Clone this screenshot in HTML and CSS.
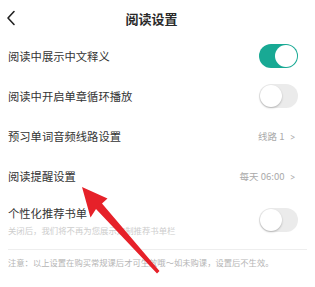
FILE: index.html
```html
<!DOCTYPE html>
<html lang="zh">
<head>
<meta charset="utf-8">
<link rel="stylesheet" href="styles.css">
</head>
<body>
<div class="page">
  <header class="header">
    <svg class="back" width="10" height="16" viewBox="0 0 10 16"><path d="M8 1.5 L2 8 L8 14.5" fill="none" stroke="#222" stroke-width="1.6" stroke-linecap="round" stroke-linejoin="round"/></svg>
    <div class="title">阅读设置</div>
  </header>
  <div class="row">
    <span class="label">阅读中展示中文释义</span>
    <span class="toggle on"><span class="knob"></span></span>
  </div>
  <div class="row">
    <span class="label">阅读中开启单章循环播放</span>
    <span class="toggle"><span class="knob"></span></span>
  </div>
  <div class="row">
    <span class="label">预习单词音频线路设置</span>
    <span class="value">线路 1<span class="chev">&gt;</span></span>
  </div>
  <div class="row">
    <span class="label">阅读提醒设置</span>
    <span class="value">每天 06:00<span class="chev">&gt;</span></span>
  </div>
  <div class="row tall">
    <div class="stack">
      <span class="label">个性化推荐书单</span>
      <span class="sub">关闭后，我们将不再为您展示定制推荐书单栏</span>
    </div>
    <span class="toggle"><span class="knob"></span></span>
  </div>
  <div class="divider"></div>
  <p class="note">注意：以上设置在购买常规课后才可生效哦～如未购课，设置后不生效。</p>
  <svg class="arrow" width="315" height="287" viewBox="0 0 315 287">
    <polygon points="82,187 107.5,198.5 102,203.5 159.5,271 157,273.5 96,209 90.5,217.5" fill="#e62129"/>
  </svg>
</div>
</body>
</html>
```
FILE: styles.css
```css
* { box-sizing: border-box; }
html, body { margin: 0; padding: 0; background: #fff; }
body {
  font-family: "Noto Sans CJK SC", "Noto Sans", sans-serif;
  color: #333;
  width: 315px;
  height: 287px;
  overflow: hidden;
}
.page { position: relative; width: 315px; height: 287px; }
.header {
  height: 36px;
  display: flex;
  align-items: center;
  justify-content: center;
  position: relative;
}
.back { position: absolute; left: 6px; top: 10px; }
.title {
  font-size: 13px;
  font-weight: 700;
  color: #2a2a2a;
  margin-left: -12px;
}
.row {
  height: 40px;
  display: flex;
  align-items: center;
  justify-content: space-between;
  padding: 0 17px 0 8px;
}
.row.tall { height: 48px; }
.label { font-size: 11.3px; color: #333; }
.stack { display: flex; flex-direction: column; gap: 3px; }
.sub { font-size: 8.4px; color: #cdcdcd; }
.value { font-size: 9.5px; color: #aaa; display: flex; align-items: center; gap: 6px; margin-right: 2px; }
.chev { font-size: 10px; color: #aaa; transform: scaleX(0.8); }
.toggle {
  width: 39px;
  height: 24px;
  border-radius: 12px;
  background: #ebebeb;
  position: relative;
  flex: none;
}
.toggle .knob {
  position: absolute;
  top: 1px;
  left: 1px;
  width: 22px;
  height: 22px;
  border-radius: 50%;
  background: #fff;
  box-shadow: 0 1px 2px rgba(0,0,0,0.25);
}
.toggle.on { background: #18a994; }
.toggle.on .knob { left: 16px; box-shadow: none; }
.divider { height: 1px; background: #eeeeee; margin: 5px 8px 0 8px; }
.note { margin: 6px 0 0 8px; font-size: 8.3px; color: #b5b5b5; }
.arrow { position: absolute; left: 0; top: 0; pointer-events: none; }
```
